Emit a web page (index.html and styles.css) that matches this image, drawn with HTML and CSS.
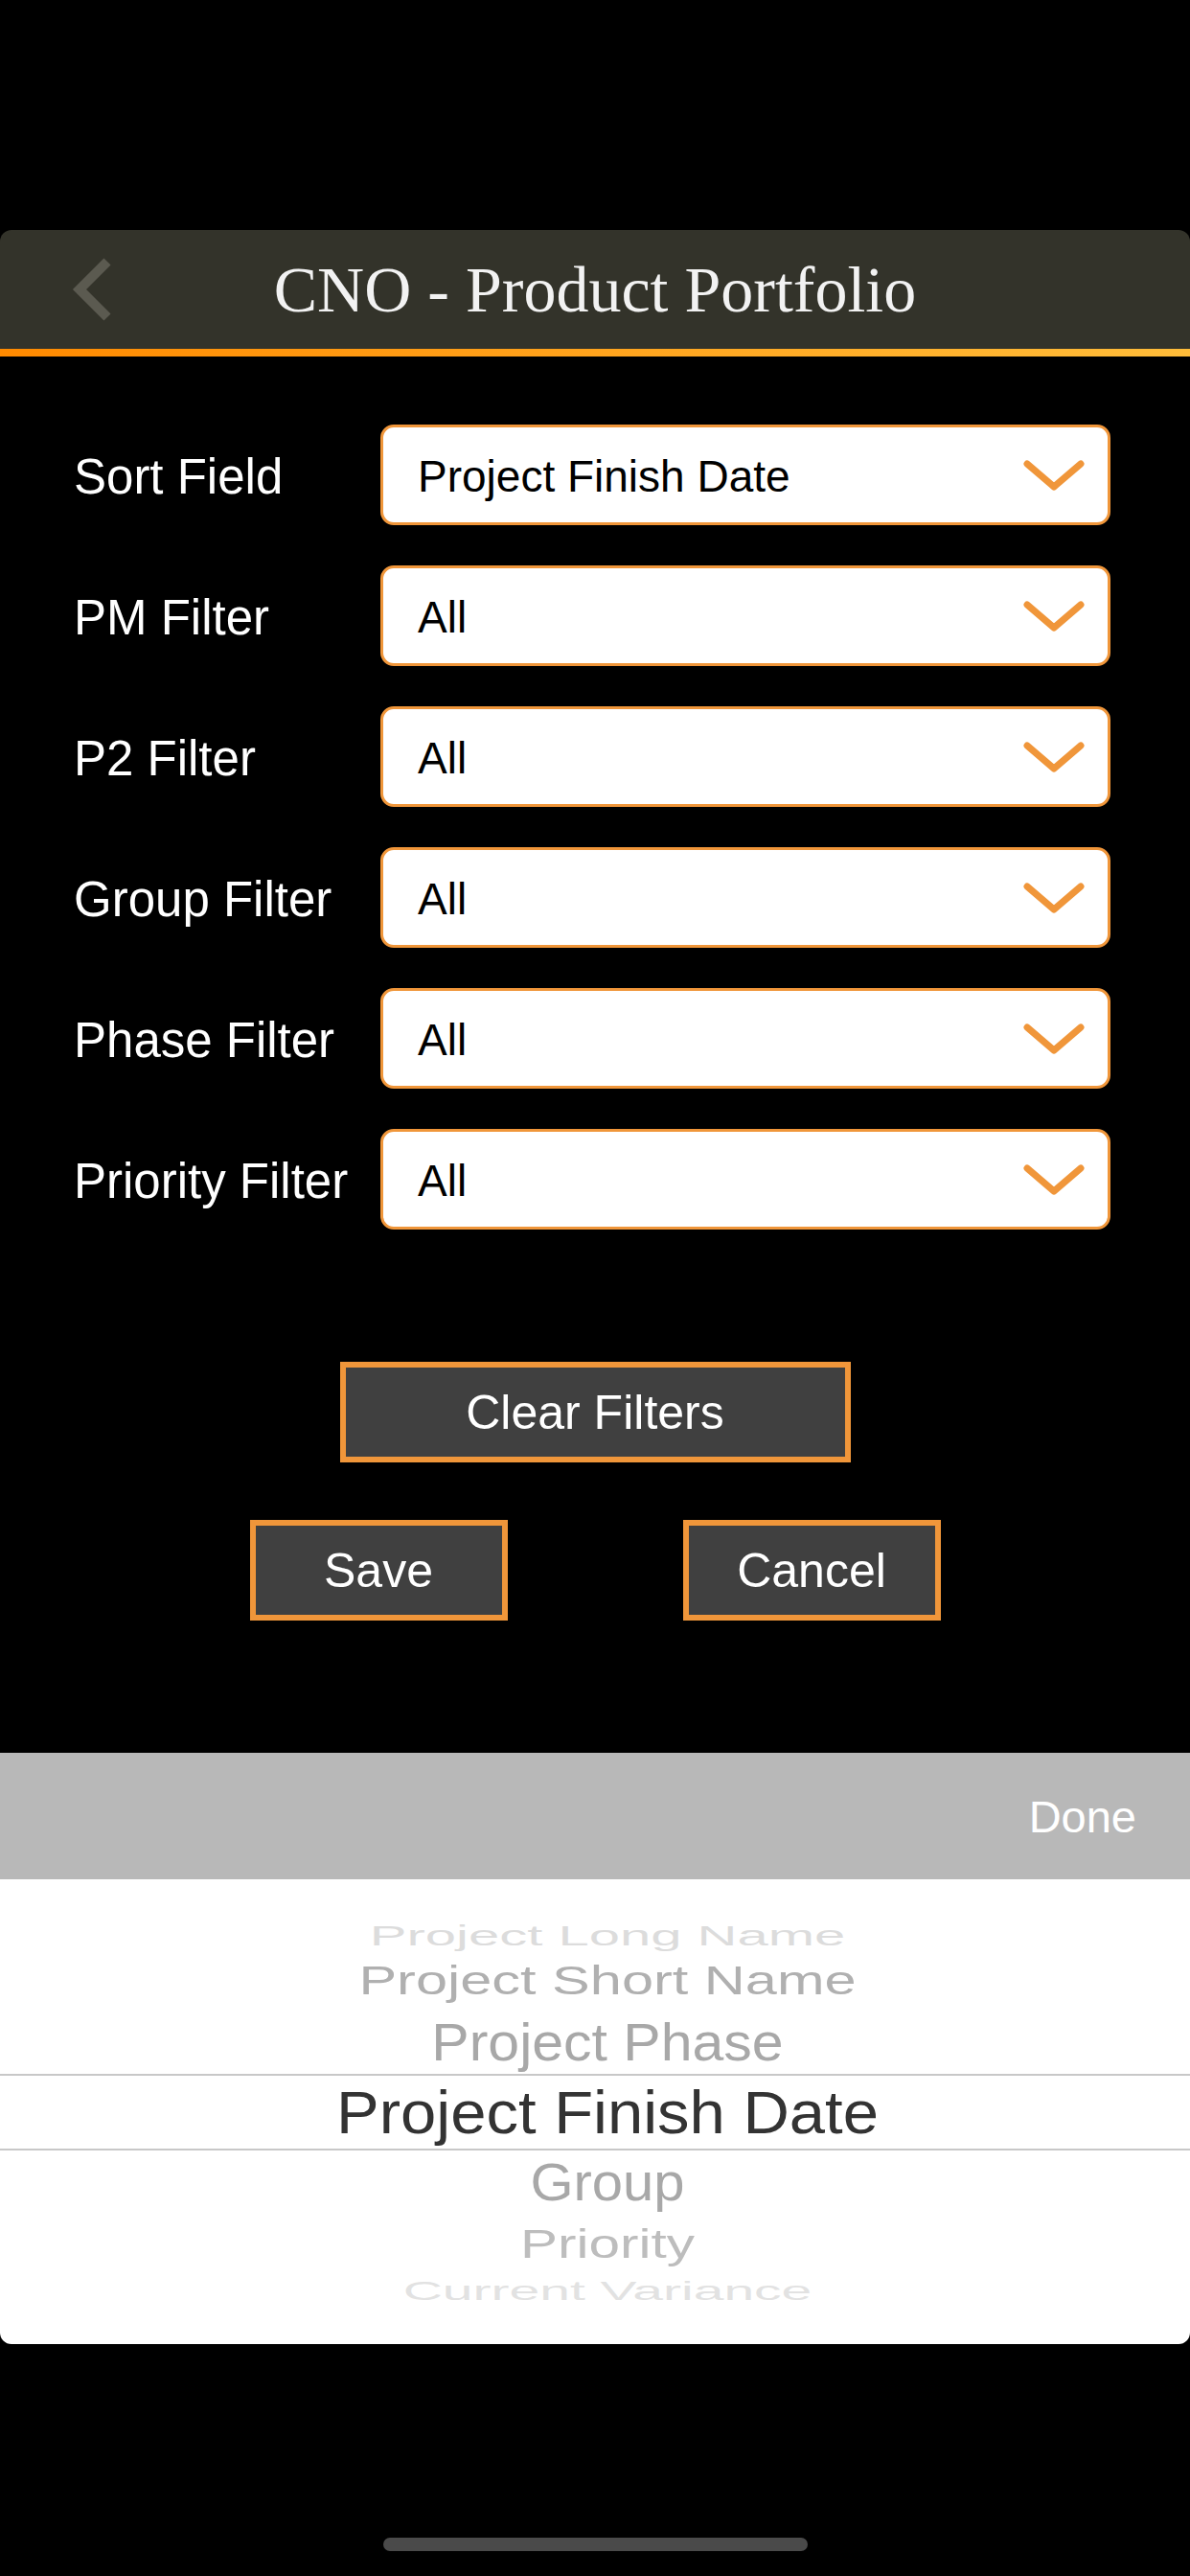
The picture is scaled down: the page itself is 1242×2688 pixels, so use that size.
FILE: index.html
```html
<!DOCTYPE html>
<html lang="en">
<head>
  <meta charset="UTF-8">
  <title>CNO - Product Portfolio</title>
  <link rel="stylesheet" href="styles.css">
</head>
<body>

  <div class="status-space"></div>

  <header class="nav">
    <div class="nav-back">
      <svg width="41" height="66" viewBox="0 0 41 66">
        <path d="M37 4 L8 33 L37 62" fill="none" stroke="#5b5a50" stroke-width="10"/>
      </svg>
    </div>
    <h1 class="nav-title">CNO - Product Portfolio</h1>
    <div></div>
  </header>
  <div class="nav-accent"></div>

  <form class="filters">
    <label>Sort Field</label>
    <div class="select"><span>Project Finish Date</span><svg class="caret" width="64" height="32" viewBox="0 0 64 32"><path d="M4 4 L32 28 L60 4"/></svg></div>

    <label>PM Filter</label>
    <div class="select"><span>All</span><svg class="caret" width="64" height="32" viewBox="0 0 64 32"><path d="M4 4 L32 28 L60 4"/></svg></div>

    <label>P2 Filter</label>
    <div class="select"><span>All</span><svg class="caret" width="64" height="32" viewBox="0 0 64 32"><path d="M4 4 L32 28 L60 4"/></svg></div>

    <label>Group Filter</label>
    <div class="select"><span>All</span><svg class="caret" width="64" height="32" viewBox="0 0 64 32"><path d="M4 4 L32 28 L60 4"/></svg></div>

    <label>Phase Filter</label>
    <div class="select"><span>All</span><svg class="caret" width="64" height="32" viewBox="0 0 64 32"><path d="M4 4 L32 28 L60 4"/></svg></div>

    <label>Priority Filter</label>
    <div class="select"><span>All</span><svg class="caret" width="64" height="32" viewBox="0 0 64 32"><path d="M4 4 L32 28 L60 4"/></svg></div>
  </form>

  <div class="actions">
    <button class="btn btn-wide">Clear Filters</button>
    <div class="btn-row">
      <button class="btn">Save</button>
      <button class="btn">Cancel</button>
    </div>
  </div>

  <div class="picker-bar">
    <span class="done">Done</span>
  </div>
  <div class="picker">
    <div class="item far-top"><span>Project Long Name</span></div>
    <div class="item near-top"><span>Project Short Name</span></div>
    <div class="item next-top"><span>Project Phase</span></div>
    <div class="item selected"><span>Project Finish Date</span></div>
    <div class="item next-bottom"><span>Group</span></div>
    <div class="item near-bottom"><span>Priority</span></div>
    <div class="item far-bottom"><span>Current Variance</span></div>
  </div>

  <div class="home-indicator"></div>

</body>
</html>
```

FILE: styles.css
```css
body { margin: 0; padding: 0; background: #000; font-family: "Liberation Sans", Arial, sans-serif; }
.status-space { height: 240px; }

/* navigation bar */
.nav {
  height: 124px;
  background: #33332a;
  border-radius: 12px 12px 0 0;
  display: grid;
  grid-template-columns: 1fr auto 1fr;
  align-items: center;
}
.nav-back { padding-left: 75px; display: flex; align-items: center; }
.nav-title {
  margin: 0;
  font-family: "Liberation Serif", "Times New Roman", serif;
  font-weight: normal;
  font-size: 68px;
  color: #f2f2f2;
  white-space: nowrap;
}
.nav-accent { height: 8px; background: linear-gradient(to right, #ff8a00, #ffbd3a); }

/* filter form */
.filters {
  padding: 71px 83px 0 77px;
  display: grid;
  grid-template-columns: 320px 1fr;
  row-gap: 42px;
  align-items: center;
}
.filters label { color: #fff; font-size: 51px; white-space: nowrap; padding-top: 3px; }
.select {
  height: 105px;
  box-sizing: border-box;
  background: #fff;
  border: 3px solid #f0963a;
  border-radius: 14px;
  padding: 0 24px 0 36px;
  display: flex;
  align-items: center;
  justify-content: space-between;
  font-size: 46px;
  color: #000;
}
.select span { padding-top: 2px; }
.caret path { fill: none; stroke: #f0963a; stroke-width: 7; stroke-linecap: round; stroke-linejoin: round; }

/* buttons */
.actions { margin-top: 138px; display: flex; flex-direction: column; align-items: center; }
.btn {
  width: 269px;
  height: 105px;
  box-sizing: border-box;
  background: #404040;
  border: 6px solid #f0963a;
  color: #fff;
  font-family: "Liberation Sans", Arial, sans-serif;
  font-size: 50px;
  padding: 0;
}
.btn-wide { width: 533px; }
.btn-row { margin-top: 60px; display: flex; gap: 183px; }

/* picker */
.picker-bar {
  margin-top: 138px;
  height: 132px;
  background: #b8b8b8;
  display: flex;
  align-items: center;
  justify-content: flex-end;
  padding-right: 56px;
}
.done { color: #fff; font-size: 47px; }
.picker {
  height: 485px;
  box-sizing: border-box;
  background: #fff;
  border-radius: 0 0 12px 12px;
  padding-top: 38px;
}
.item { text-align: center; font-size: 58px; white-space: nowrap; padding-left: 26px; }
.item span { display: inline-block; }
.far-top { height: 41px; line-height: 41px; color: #dcdcdc; }
.far-top span { transform: scaleY(0.51); }
.near-top { height: 54px; line-height: 54px; color: #b0b0b0; font-size: 59.5px; }
.near-top span { transform: scaleY(0.71); }
.next-top { margin-top: 5px; height: 65px; line-height: 65px; color: #a8a8a8; font-size: 59px; }
.next-top span { transform: scaleY(0.93); }
.selected {
  height: 80px;
  box-sizing: border-box;
  line-height: 76px;
  border-top: 2px solid #c8c8c8;
  border-bottom: 2px solid #c8c8c8;
  color: #333;
  font-size: 67px;
}
.selected span { transform: scaleY(0.94); }
.next-bottom { height: 66px; line-height: 66px; color: #a8a8a8; }
.next-bottom span { transform: scaleY(0.96); }
.near-bottom { height: 61px; line-height: 61px; color: #bdbdbd; font-size: 58.5px; }
.near-bottom span { transform: scaleY(0.74); }
.far-bottom { height: 38px; line-height: 38px; color: #e2e2e2; font-size: 57px; }
.far-bottom span { transform: scaleY(0.49); }

.home-indicator { width: 443px; height: 14px; margin: 202px auto 0; background: #4a4a4a; border-radius: 7px; }
```
